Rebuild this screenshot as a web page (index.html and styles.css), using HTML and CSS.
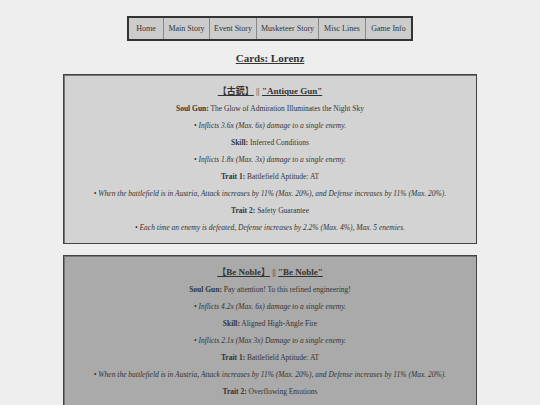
FILE: index.html
```html
<!DOCTYPE html>
<html>
<head>
<meta charset="utf-8">
<link rel="stylesheet" href="styles.css">
</head>
<body>
<nav class="nav">
  <a class="nav-item" href="#">Home</a>
  <a class="nav-item" href="#">Main Story</a>
  <a class="nav-item" href="#">Event Story</a>
  <a class="nav-item" href="#">Musketeer Story</a>
  <a class="nav-item" href="#">Misc Lines</a>
  <a class="nav-item" href="#">Game Info</a>
</nav>
<h1 class="page-title">Cards: Lorenz</h1>

<section class="card card-light">
  <h2 class="card-title"><u>【古銃】</u> <span class="sep">||</span> <u>"Antique Gun"</u></h2>
  <p><b>Soul Gun:</b> The Glow of Admiration Illuminates the Night Sky</p>
  <p class="desc">• Inflicts 3.6x (Max. 6x) damage to a single enemy.</p>
  <p><b>Skill:</b> Inferred Conditions</p>
  <p class="desc">• Inflicts 1.8x (Max. 3x) damage to a single enemy.</p>
  <p><b>Trait 1:</b> Battlefield Aptitude: AT</p>
  <p class="desc">• When the battlefield is in Austria, Attack increases by 11% (Max. 20%), and Defense increases by 11% (Max. 20%).</p>
  <p><b>Trait 2:</b> Safety Guarantee</p>
  <p class="desc">• Each time an enemy is defeated, Defense increases by 2.2% (Max. 4%), Max. 5 enemies.</p>
</section>

<section class="card card-dark">
  <h2 class="card-title"><u>【Be Noble】</u> <span class="sep">||</span> <u>"Be Noble"</u></h2>
  <p><b>Soul Gun:</b> Pay attention! To this refined engineering!</p>
  <p class="desc">• Inflicts 4.2x (Max. 6x) damage to a single enemy.</p>
  <p><b>Skill:</b> Aligned High-Angle Fire</p>
  <p class="desc">• Inflicts 2.1x (Max 3x) Damage to a single enemy.</p>
  <p><b>Trait 1:</b> Battlefield Aptitude: AT</p>
  <p class="desc">• When the battlefield is in Austria, Attack increases by 11% (Max. 20%), and Defense increases by 11% (Max. 20%).</p>
  <p><b>Trait 2:</b> Overflowing Emotions</p>
  <p class="desc">• Increases Soul Gun damage by 27.5% (Max. 50%).</p>
</section>
</body>
</html>
```

FILE: styles.css
```css
html, body {
  margin: 0;
  padding: 0;
  background: #eeeeee;
}
body {
  font-family: "Liberation Serif", "Noto Sans CJK JP", serif;
  color: #333333;
  padding: 16px 63px 20px;
}
.nav {
  display: grid;
  grid-template-columns: 34px 46px 47px 62px 47px 46px;
  width: max-content;
  margin: 0 auto;
  border: 2px solid #333333;
  background: #cccccc;
}
.nav-item {
  display: block;
  font-size: 8px;
  line-height: 21px;
  text-align: center;
  color: #333333;
  text-decoration: none;
  border-left: 1px solid #888888;
}
.nav-item:first-child {
  border-left: none;
}
.page-title {
  font-size: 11px;
  text-align: center;
  text-decoration: underline;
  margin: 11px 0 9px;
  line-height: 13px;
}
.card {
  border: 1px solid #444444;
  box-shadow: inset 1px 1px 0 #777777;
  text-align: center;
  padding: 3px 0;
  margin-bottom: 11px;
}
.card-light {
  background: #d3d3d3;
}
.card-dark {
  background: #aaaaaa;
}
.card-title {
  font-size: 9px;
  line-height: 10px;
  margin: 8px 0 7px;
}
.card-title .sep {
  font-weight: normal;
}
.card p {
  font-size: 7.5px;
  line-height: 9px;
  margin: 8px 0;
}
.card p.desc {
  font-style: italic;
}
```
